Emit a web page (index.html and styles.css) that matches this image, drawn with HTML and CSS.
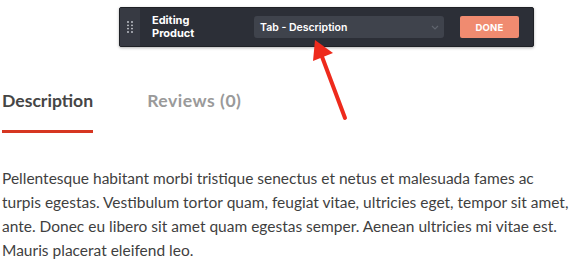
FILE: index.html
```html
<!DOCTYPE html>
<html>
<head>
<meta charset="utf-8">
<link rel="stylesheet" href="styles.css">
</head>
<body>
<div class="page">
  <div class="toolbar-row">
    <div class="toolbar">
      <div class="handle">
        <svg width="6" height="12" viewBox="0 0 6 12">
          <g fill="#c9ccd2">
            <circle cx="1" cy="1" r="0.9"/><circle cx="5" cy="1" r="0.9"/>
            <circle cx="1" cy="4.3" r="0.9"/><circle cx="5" cy="4.3" r="0.9"/>
            <circle cx="1" cy="7.6" r="0.9"/><circle cx="5" cy="7.6" r="0.9"/>
            <circle cx="1" cy="11" r="0.9"/><circle cx="5" cy="11" r="0.9"/>
          </g>
        </svg>
      </div>
      <div class="title">Editing<br>Product</div>
      <div class="select">
        <span>Tab - Description</span>
        <svg class="chev" width="8" height="5" viewBox="0 0 8 5"><path d="M1 1l3 3 3-3" fill="none" stroke="#5f646d" stroke-width="1.2"/></svg>
      </div>
      <button class="done">DONE</button>
    </div>
  </div>
  <div class="tabs">
    <div class="tab active">Description</div>
    <div class="tab">Reviews (0)</div>
  </div>
  <p class="desc">Pellentesque habitant morbi tristique senectus et netus et malesuada fames ac turpis egestas. Vestibulum tortor quam, feugiat vitae, ultricies eget, tempor sit amet, ante. Donec eu libero sit amet quam egestas semper. Aenean ultricies mi vitae est. Mauris placerat eleifend leo.</p>
</div>
<svg class="arrow" width="60" height="90" viewBox="300 35 60 90">
  <path d="M345 118 L321 54" stroke="#ee2a1c" stroke-width="4" stroke-linecap="round" fill="none"/>
  <path d="M315 40 L333 53 L313 61 Z" fill="#ee2a1c"/>
</svg>
</body>
</html>
```
FILE: styles.css
```css
html, body { margin: 0; padding: 0; background: #fff; }
body { width: 573px; height: 265px; overflow: hidden; position: relative; }
.page { padding-left: 2px; }
.toolbar-row { padding-top: 7px; padding-left: 117px; }
.toolbar {
  width: 415px; height: 40px; box-sizing: border-box;
  background: #2c2f37; border: 1px solid #1f2126; border-radius: 2px;
  display: flex; align-items: center;
  box-shadow: 0 1px 3px rgba(0,0,0,0.3);
  font-family: Inter, "Liberation Sans", sans-serif;
}
.handle {
  width: 20px; height: 100%; background: #373a43;
  display: flex; align-items: center; justify-content: center;
}
.title {
  color: #fff; font-weight: 700; font-size: 11px; line-height: 13px;
  margin-left: 12px; width: 102px;
}
.select {
  width: 190px; height: 22px; box-sizing: border-box;
  background: #3f434c; border-radius: 3px;
  display: flex; align-items: center; justify-content: space-between;
  padding: 0 5px 0 6px;
  color: #fff; font-size: 10.5px; font-weight: 600;
}
.done {
  margin-left: 16px; width: 59px; height: 22px;
  background: #f08b70; border: none; border-radius: 2px;
  color: #fff; font-family: Inter, "Liberation Sans", sans-serif;
  font-weight: 700; font-size: 9.5px; letter-spacing: 0.2px; padding: 0;
}
.tabs {
  display: flex; gap: 54px; margin-top: 43px;
  font-family: Lato, "Noto Sans", sans-serif; font-size: 17.6px; font-weight: 700;
}
.tab { color: #9a9a9a; padding-bottom: 18px; line-height: 22px; letter-spacing: 0.5px; }
.tab.active { color: #454545; border-bottom: 3px solid #d63621; letter-spacing: 0; }
.desc {
  margin: 33px 0 0; width: 570px;
  font-family: Lato, "Noto Sans", sans-serif; font-size: 15.5px; line-height: 24px;
  color: #3f3f3f;
}
.arrow { position: absolute; left: 300px; top: 35px; }
```
